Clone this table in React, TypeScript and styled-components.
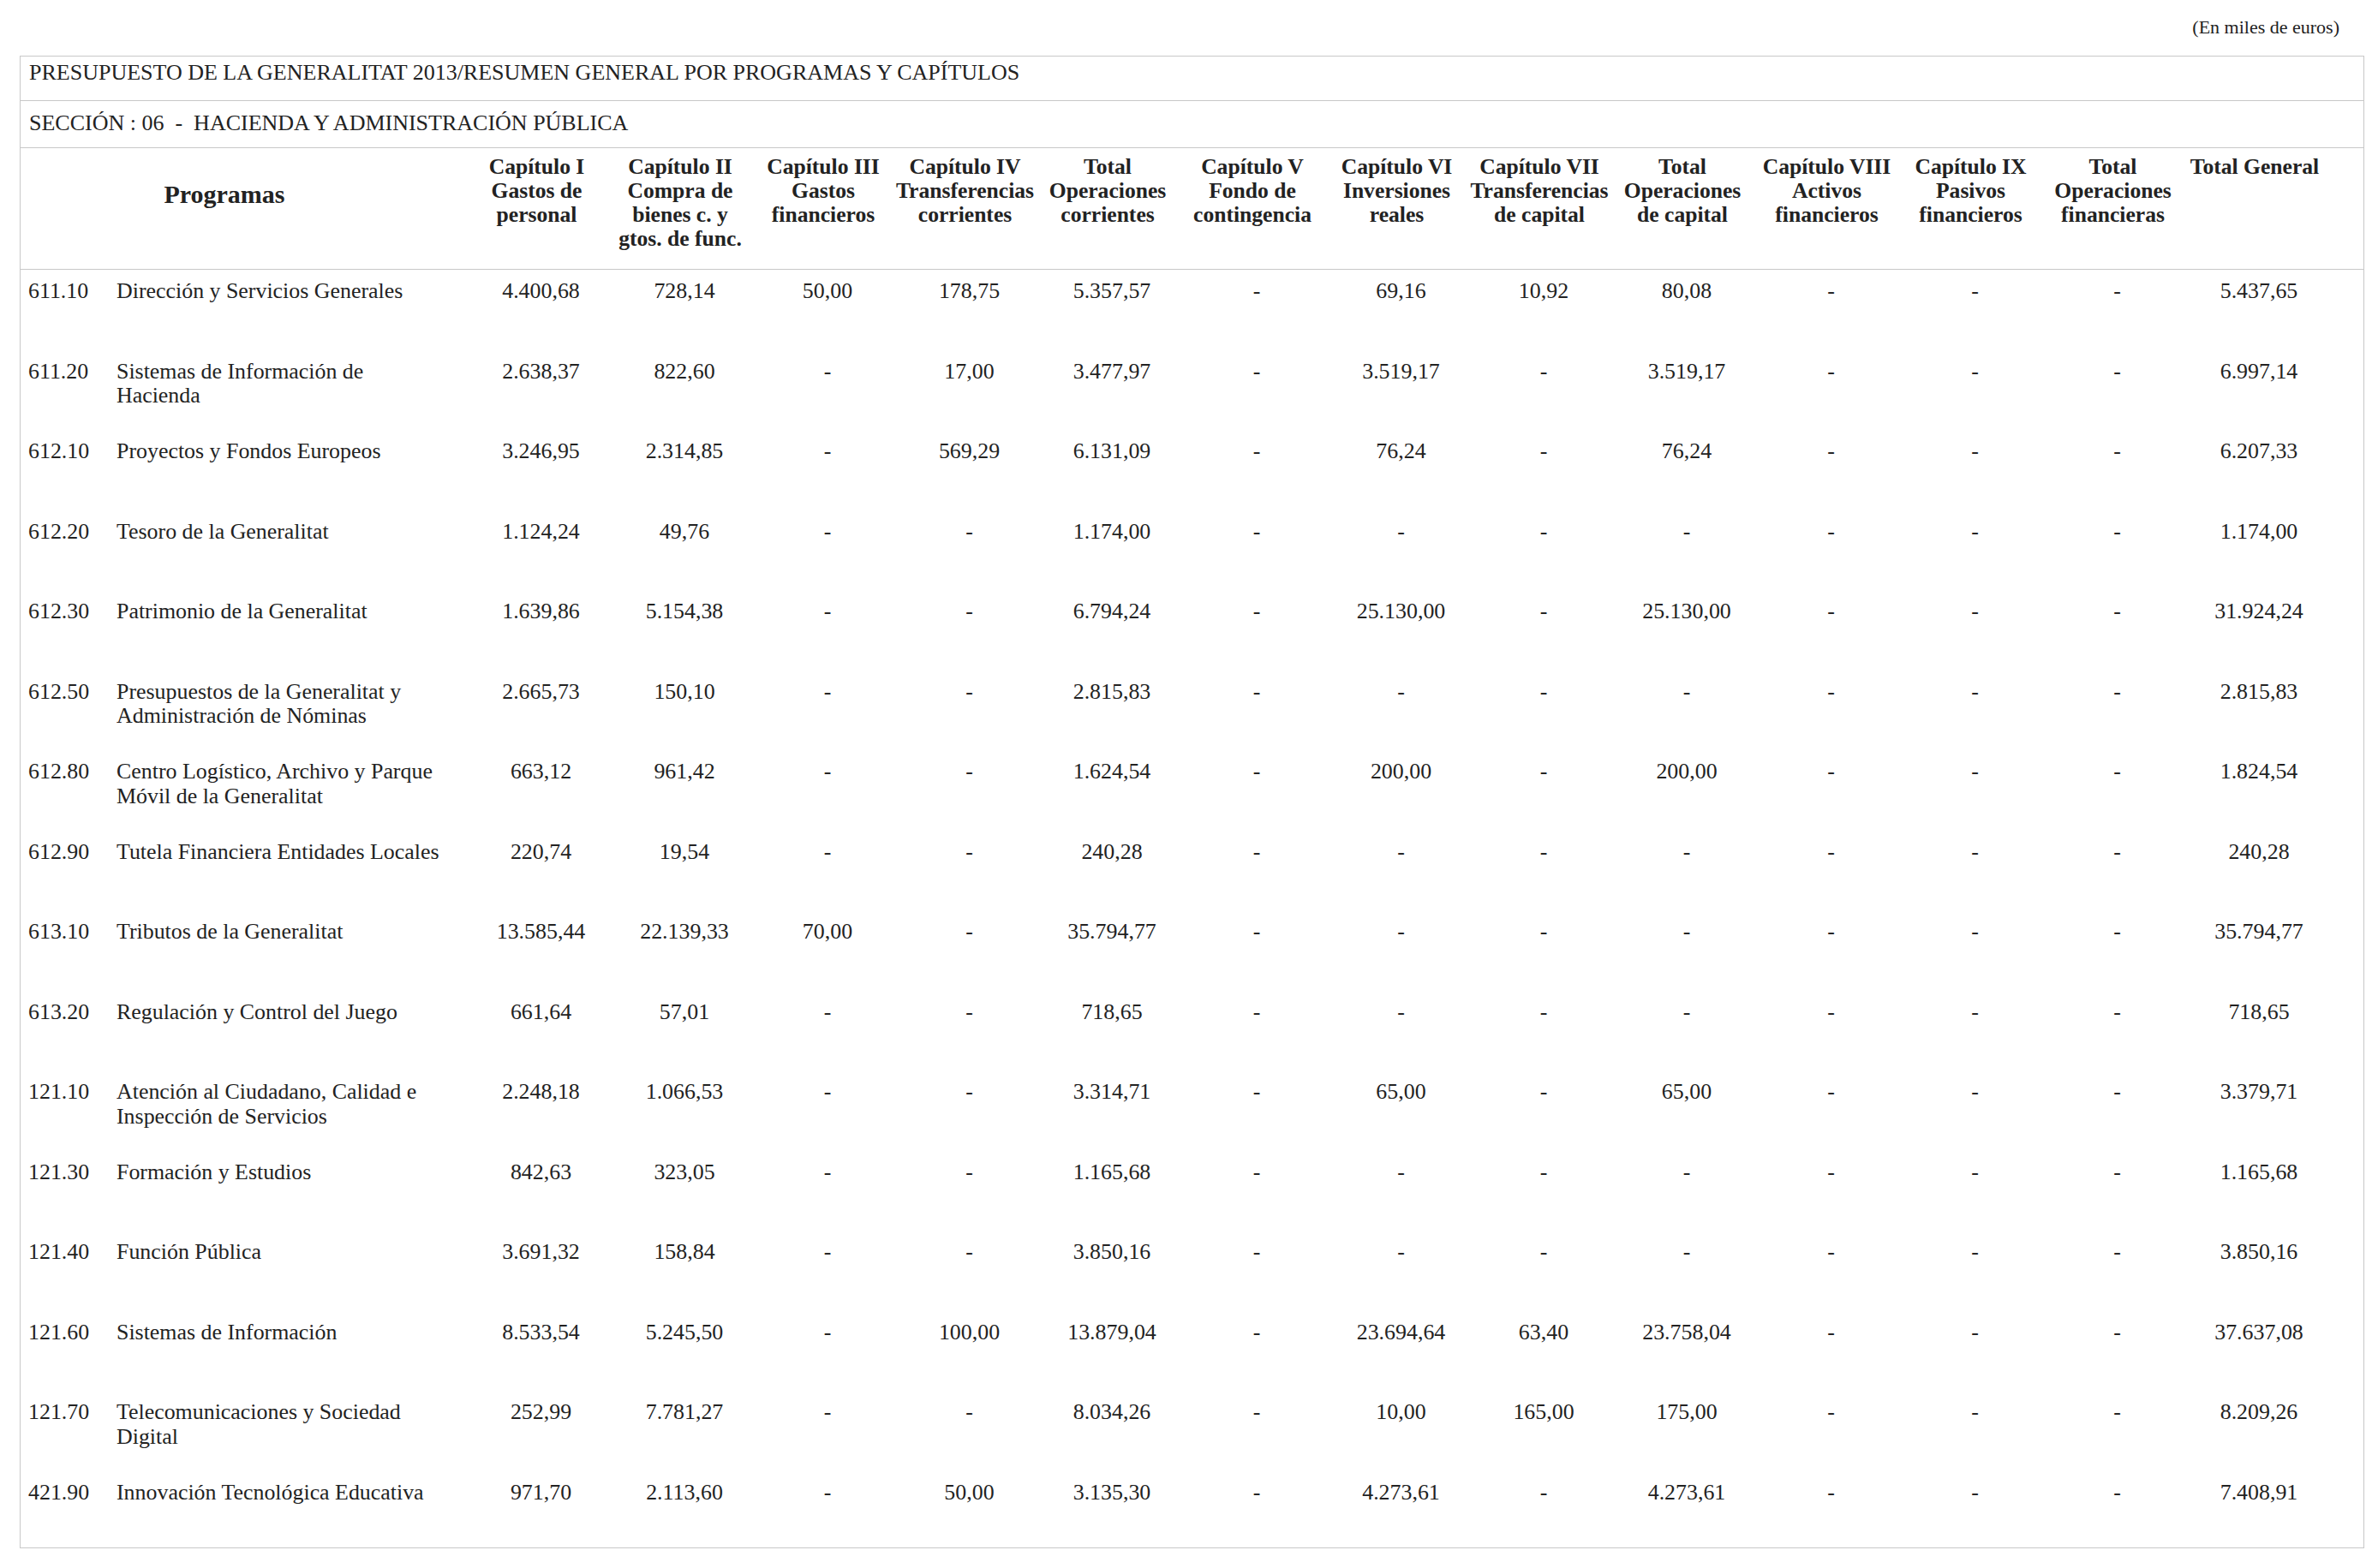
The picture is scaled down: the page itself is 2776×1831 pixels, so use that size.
import React from "react";
import styled, { createGlobalStyle } from "styled-components";

const GlobalStyle = createGlobalStyle`
  html, body {
    margin: 0;
    padding: 0;
    background: #ffffff;
  }
  body {
    font-family: "Liberation Serif", "Times New Roman", serif;
    color: #222222;
  }
  * { box-sizing: border-box; }
`;

const LINE = "#c8c8c8";
const NUM_COLS = [167, 168, 166, 165, 168, 170, 167, 166, 168, 169, 167, 165, 166];
const numTemplate = NUM_COLS.map((w) => `${w}px`).join(" ");

const Page = styled.div`
  display: flex;
  flex-direction: column;
  padding: 19px 0 0 23px;
  width: 2760px;
`;

const Note = styled.div`
  font-size: 22px;
  line-height: 26px;
  text-align: right;
  padding-right: 29px;
`;

const Table = styled.div`
  margin-top: 20px;
  width: 2737px;
  border: 1px solid ${LINE};
  display: flex;
  flex-direction: column;
`;

const TitleRow = styled.div`
  padding: 4px 10px 18px;
  font-size: 26px;
  line-height: 29px;
  border-bottom: 1px solid ${LINE};
`;

const SectionRow = styled.div`
  padding: 10.5px 10px 14.5px;
  font-size: 26px;
  line-height: 29px;
  white-space: pre;
  border-bottom: 1px solid ${LINE};
`;

const HeaderRow = styled.div`
  display: grid;
  grid-template-columns: 524px ${numTemplate} 1fr;
  align-items: start;
  height: 142px;
  border-bottom: 1px solid ${LINE};
`;

const ProgramasHead = styled.div`
  padding: 37px 48px 0 0;
  text-align: center;
  font-size: 30px;
  line-height: 34px;
  font-weight: bold;
`;

const HeadCell = styled.div`
  display: flex;
  flex-direction: column;
  align-items: center;
  padding: 8px 10px 0 0;
  font-size: 25.6px;
  line-height: 28px;
  font-weight: bold;
  white-space: nowrap;
`;

const Body = styled.div`
  display: flex;
  flex-direction: column;
`;

const DataRow = styled.div<{ $h: number }>`
  display: grid;
  grid-template-columns: 112px 412px ${numTemplate} 1fr;
  align-items: start;
  height: ${(p) => p.$h}px;
  padding-top: 11px;
  font-size: 25.9px;
  line-height: 28.5px;
`;

const Code = styled.div`
  padding-left: 9px;
  white-space: nowrap;
`;

const Desc = styled.div`
  padding-right: 28px;
`;

const Num = styled.div`
  text-align: center;
  white-space: nowrap;
`;

const headers: string[][] = [
  ["Capítulo I", "Gastos de", "personal"],
  ["Capítulo II", "Compra de", "bienes c. y", "gtos. de func."],
  ["Capítulo III", "Gastos", "financieros"],
  ["Capítulo IV", "Transferencias", "corrientes"],
  ["Total", "Operaciones", "corrientes"],
  ["Capítulo V", "Fondo de", "contingencia"],
  ["Capítulo VI", "Inversiones", "reales"],
  ["Capítulo VII", "Transferencias", "de capital"],
  ["Total", "Operaciones", "de capital"],
  ["Capítulo VIII", "Activos", "financieros"],
  ["Capítulo IX", "Pasivos", "financieros"],
  ["Total", "Operaciones", "financieras"],
  ["Total General"],
];

type Row = { code: string; desc: string; v: string[] };

const rows: Row[] = [
  { code: "611.10", desc: "Dirección y Servicios Generales", v: ["4.400,68", "728,14", "50,00", "178,75", "5.357,57", "-", "69,16", "10,92", "80,08", "-", "-", "-", "5.437,65"] },
  { code: "611.20", desc: "Sistemas de Información de Hacienda", v: ["2.638,37", "822,60", "-", "17,00", "3.477,97", "-", "3.519,17", "-", "3.519,17", "-", "-", "-", "6.997,14"] },
  { code: "612.10", desc: "Proyectos y Fondos Europeos", v: ["3.246,95", "2.314,85", "-", "569,29", "6.131,09", "-", "76,24", "-", "76,24", "-", "-", "-", "6.207,33"] },
  { code: "612.20", desc: "Tesoro de la Generalitat", v: ["1.124,24", "49,76", "-", "-", "1.174,00", "-", "-", "-", "-", "-", "-", "-", "1.174,00"] },
  { code: "612.30", desc: "Patrimonio de la Generalitat", v: ["1.639,86", "5.154,38", "-", "-", "6.794,24", "-", "25.130,00", "-", "25.130,00", "-", "-", "-", "31.924,24"] },
  { code: "612.50", desc: "Presupuestos de la Generalitat y Administración de Nóminas", v: ["2.665,73", "150,10", "-", "-", "2.815,83", "-", "-", "-", "-", "-", "-", "-", "2.815,83"] },
  { code: "612.80", desc: "Centro Logístico, Archivo y Parque Móvil de la Generalitat", v: ["663,12", "961,42", "-", "-", "1.624,54", "-", "200,00", "-", "200,00", "-", "-", "-", "1.824,54"] },
  { code: "612.90", desc: "Tutela Financiera Entidades Locales", v: ["220,74", "19,54", "-", "-", "240,28", "-", "-", "-", "-", "-", "-", "-", "240,28"] },
  { code: "613.10", desc: "Tributos de la Generalitat", v: ["13.585,44", "22.139,33", "70,00", "-", "35.794,77", "-", "-", "-", "-", "-", "-", "-", "35.794,77"] },
  { code: "613.20", desc: "Regulación y Control del Juego", v: ["661,64", "57,01", "-", "-", "718,65", "-", "-", "-", "-", "-", "-", "-", "718,65"] },
  { code: "121.10", desc: "Atención al Ciudadano, Calidad e Inspección de Servicios", v: ["2.248,18", "1.066,53", "-", "-", "3.314,71", "-", "65,00", "-", "65,00", "-", "-", "-", "3.379,71"] },
  { code: "121.30", desc: "Formación y Estudios", v: ["842,63", "323,05", "-", "-", "1.165,68", "-", "-", "-", "-", "-", "-", "-", "1.165,68"] },
  { code: "121.40", desc: "Función Pública", v: ["3.691,32", "158,84", "-", "-", "3.850,16", "-", "-", "-", "-", "-", "-", "-", "3.850,16"] },
  { code: "121.60", desc: "Sistemas de Información", v: ["8.533,54", "5.245,50", "-", "100,00", "13.879,04", "-", "23.694,64", "63,40", "23.758,04", "-", "-", "-", "37.637,08"] },
  { code: "121.70", desc: "Telecomunicaciones y Sociedad Digital", v: ["252,99", "7.781,27", "-", "-", "8.034,26", "-", "10,00", "165,00", "175,00", "-", "-", "-", "8.209,26"] },
  { code: "421.90", desc: "Innovación Tecnológica Educativa", v: ["971,70", "2.113,60", "-", "50,00", "3.135,30", "-", "4.273,61", "-", "4.273,61", "-", "-", "-", "7.408,91"] },
];

export default function App() {
  return (
    <>
      <GlobalStyle />
      <Page>
        <Note>(En miles de euros)</Note>
        <Table>
          <TitleRow>PRESUPUESTO DE LA GENERALITAT 2013/RESUMEN GENERAL POR PROGRAMAS Y CAPÍTULOS</TitleRow>
          <SectionRow>{"SECCIÓN : 06  -  HACIENDA Y ADMINISTRACIÓN PÚBLICA"}</SectionRow>
          <HeaderRow>
            <ProgramasHead>Programas</ProgramasHead>
            {headers.map((lines, i) => (
              <HeadCell key={i}>
                {lines.map((l, j) => (
                  <span key={j}>{l}</span>
                ))}
              </HeadCell>
            ))}
            <div />
          </HeaderRow>
          <Body>
            {rows.map((r, i) => (
              <DataRow key={r.code} $h={i === rows.length - 1 ? 89.6 : 93.53}>
                <Code>{r.code}</Code>
                <Desc>{r.desc}</Desc>
                {r.v.map((val, j) => (
                  <Num key={j}>{val}</Num>
                ))}
                <div />
              </DataRow>
            ))}
          </Body>
        </Table>
      </Page>
    </>
  );
}
